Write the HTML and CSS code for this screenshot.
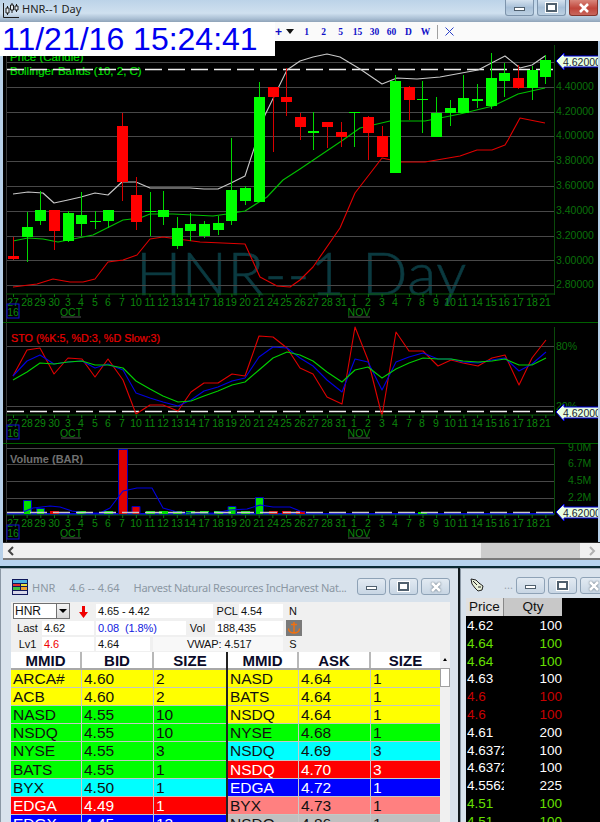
FILE: index.html
```html
<!DOCTYPE html>
<html lang="en">
<head>
<meta charset="utf-8">
<title>HNR--1 Day</title>
<link rel="stylesheet" href="styles.css">
</head>
<body>
<div class="chart-window">
  <header class="titlebar">
    <svg class="app-icon" width="16" height="16" viewBox="0 0 16 16"><path class="ico-line" d="M.5 1V15.5H16M4.5 4V13M9 1V11M13.5 2V10"/><path class="ico-box" d="M3 6h3v5H3zM7.500 3h3v5h-3zM12 4h3v4h-3z"/></svg>
    <span class="title-text">HNR--1 Day</span>
    <div class="wbtns">
      <span class="wbtn"><i class="g-min"></i></span>
      <span class="wbtn"><i class="g-max"></i></span>
      <span class="wbtn wbtn-close"><svg width="12" height="10" viewBox="0 0 12 10"><path d="M2 1l8 8M10 1L2 9"/></svg></span>
    </div>
  </header>
  <div class="toolbar">
    <span class="tool-glyph tool-plus">+</span>
    <span class="tool-glyph tool-down"></span>
    <span class="tf">1</span><span class="tf">2</span><span class="tf">5</span><span class="tf">15</span><span class="tf">30</span><span class="tf">60</span><span class="tf">D</span><span class="tf">W</span>
    <span class="tool-sep"></span>
    <svg class="tool-x" width="9" height="9" viewBox="0 0 9 9"><path d="M.5.500l8 8M8.500.500l-8 8"/></svg>
  </div>
  <div class="timestamp">11/21/16 15:24:41</div>

  <svg class="panel panel-price" width="595" height="282" viewBox="3 41 595 282">
    <defs>
      <g id="axis">
        <path class="axis-line" d="M6-12H554"/>
        <line class="ticks" x1="13" x2="554" y1="-10.500" y2="-10.500"/>
        <g class="dates">
          <text x="13">27</text><text x="27">28</text><text x="40">29</text><text x="54">30</text><text x="68">3</text><text x="81">4</text><text x="95">5</text><text x="108">6</text><text x="122">7</text><text x="136">10</text><text x="150">11</text><text x="163">12</text><text x="177">13</text><text x="190">14</text><text x="204">17</text><text x="218">18</text><text x="231">19</text><text x="245">20</text><text x="259">21</text><text x="273">24</text><text x="286">25</text><text x="300">26</text><text x="313">27</text><text x="327">28</text><text x="341">31</text><text x="354">1</text><text x="368">2</text><text x="382">3</text><text x="395">4</text><text x="409">7</text><text x="422">8</text><text x="436">9</text><text x="450">10</text><text x="463">11</text><text x="477">14</text><text x="491">15</text><text x="504">16</text><text x="518">17</text><text x="532">18</text><text x="545">21</text>
          <text x="13" y="10">16</text><text x="71" y="10">OCT</text><text x="359" y="10">NOV</text>
        </g>
        <rect class="year-box" x="7" y="-2" width="12" height="14"/>
        <path class="month-rule" d="M61 11H81M348 11H370"/>
      </g>
      <g id="tag">
        <polygon class="tag-shape" points="556,0 564,-8 564,-5 599,-5 599,6 564,6 564,9"/>
        <text class="tag-text" x="563" y="4.500">4.62000</text>
      </g>
    </defs>
    <text class="watermark" x="136" y="295">HNR--1 Day</text>
    <path class="frame-line" d="M6.500 41V323"/>
    <path class="grid" d="M7 62.500H554M7 87.500H554M7 112.500H554M7 136.500H554M7 161.500H554M7 186.500H554M7 211.500H554M7 236.500H554M7 260.500H554M7 285.500H554"/>
    <text class="legend" x="10" y="61">Price (Candle)</text>
    <text class="legend" x="10" y="75">Bollinger Bands (10, 2, C)</text>
    <path class="dash" d="M7 69.500H554"/>
    <polyline class="band band-w" points="13,194 28,192 43,193 54,203 68,200 81,197 95,193 108,195 122,182 136,182 150,188 163,188 177,188 190,188 204,189 218,189 231,183 245,176 265,115 287,70 300,61 313,57 327,54 340,57 360,69 382,84 397,78 417,79 440,77 478,70 505,56 520,68 532,65 545,56"/>
    <polyline class="band band-g" points="13,241 28,238 43,239 58,242 93,235 123,220 140,218 150,214 173,214 213,216 227,214 245,211 267,197 283,180 300,169 343,140 360,128 390,121 425,121 460,114 493,106 518,94 545,88"/>
    <polyline class="band band-r" points="13,287 37,284 53,279 70,282 83,282 95,279 108,262 123,260 137,255 150,239 163,237 200,242 245,244 260,277 277,286 290,287 300,280 313,267 340,228 355,193 382,158 400,162 425,162 460,156 477,150 492,150 505,145 508,140 520,118 545,123"/>
    <path class="wick wick-g" d="M27.500 212V262M40.500 191V225M68.500 211V242M81.500 192V236M95.500 211V229M108.500 210V228M150.500 192V236M163.500 191V225M177.500 217V249M190.500 213V241M204.500 221V238M218.500 216V235M231.500 138V225M245.500 186V205M259.500 82V202M313.500 112V150M354.500 112V147M395.500 75V173M422.500 81V133M436.500 97V137M450.500 100V126M463.500 75V113M477.500 84V108M491.500 53V109M504.500 63V97M532.500 66V100M545.500 55V84"/>
    <path class="wick wick-r" d="M13.500 237V260M54.500 210V250M122.500 113V201M136.500 177V230M273.500 87V152M286.500 68V116M300.500 113V140M327.500 122V148M341.500 122V147M368.500 116V160M382.500 126V157M409.500 86V120M518.500 65V89"/>
    <path class="body-g" d="M22 227h11v10H22zM35 210h11v11H35zM63 213h11v28H63zM76 215h11v9H76zM90 221h11v1H90zM103 210h11v11h-11zM145 211h11v1h-11zM158 210h11v7h-11zM172 228h11v18h-11zM185 224h11v7h-11zM199 224h11v12h-11zM213 223h11v7h-11zM226 190h11v31h-11zM240 188h11v13h-11zM254 97h11v105h-11zM308 131h11v2h-11zM349 112h11v1h-11zM390 81h11v92h-11zM417 99h11v1h-11zM431 113h11v24h-11zM445 108h11v5h-11zM458 98h11v15h-11zM472 99h11v2h-11zM486 78h11v28h-11zM499 73h11v8h-11zM527 70h11v18h-11zM540 60h11v17h-11z"/>
    <path class="body-r" d="M8 256h11v3H8zM49 210h11v21H49zM117 126h11v56h-11zM131 195h11v27h-11zM268 87h11v10h-11zM281 97h11v5h-11zM295 117h11v10h-11zM322 122h11v5h-11zM336 132h11v5h-11zM363 117h11v16h-11zM377 136h11v21h-11zM404 87h11v13h-11zM513 78h11v10h-11z"/>
    <path class="v-axis" d="M554.500 45V295"/>
    <g class="y-labels">
      <text x="556" y="90">4.40000</text><text x="556" y="115">4.20000</text><text x="556" y="139">4.00000</text><text x="556" y="164">3.80000</text><text x="556" y="189">3.60000</text><text x="556" y="214">3.40000</text><text x="556" y="239">3.20000</text><text x="556" y="264">3.00000</text><text x="556" y="288">2.80000</text>
    </g>
    <use href="#axis" y="306"/>
    <use href="#tag" y="61"/>
    <path class="panel-rule" d="M3 322.500H598"/>
  </svg>

  <svg class="panel panel-sto" width="595" height="121" viewBox="3 323 595 121">
    <path class="frame-line" d="M6.500 323V444"/>
    <path class="grid" d="M7 346.500H554M7 406.500H554"/>
    <text class="sto-title" x="11" y="342">STO (%K:5, %D:3, %D Slow:3)</text>
    <g class="y-labels"><text x="556" y="350">80%</text><text x="556" y="410">20%</text></g>
    <path class="dash" d="M7 411.500H554"/>
    <polyline class="band band-r" points="13,376 27,350 40,348 54,374 68,358 82,359 95,377 108,359 123,380 136,414 150,405 163,405 178,411 191,392 204,383 218,383 232,374 245,376 259,336 273,337 287,348 300,368 313,374 327,397 342,404 355,327 368,360 382,416 396,332 409,351 423,351 438,366 451,360 463,363 478,366 492,358 505,355 519,385 532,358 546,340"/>
    <polyline class="band band-b" points="13,376 27,361 40,355 54,364 68,362 82,361 95,368 108,364 123,370 136,393 150,398 163,402 178,406 191,400 204,391 218,387 232,381 245,378 259,357 273,347 287,348 300,358 313,366 327,380 342,392 355,359 368,362 382,390 396,362 409,357 423,353 438,359 451,359 463,362 478,363 492,360 505,358 519,371 532,364 546,352"/>
    <polyline class="band band-g2" points="13,380 27,372 40,363 54,364 68,362 82,361 95,365 108,365 123,368 136,381 150,389 163,396 178,402 191,401 204,396 218,391 232,385 245,382 259,370 273,358 287,352 300,355 313,361 327,372 342,382 355,370 368,367 382,378 396,369 409,363 423,358 438,359 451,359 463,361 478,362 492,361 505,359 519,365 532,365 546,358"/>
    <path class="v-axis" d="M554.500 327V416"/>
    <use href="#axis" y="427"/>
    <use href="#tag" y="412"/>
    <path class="panel-rule" d="M3 443.500H598"/>
  </svg>

  <svg class="panel panel-vol" width="595" height="98" viewBox="3 444 595 98">
    <path class="frame-line" d="M6.500 444V542"/>
    <path class="grid" d="M7 448.500H554M7 464.500H554M7 481.500H554M7 498.500H554"/>
    <text class="vol-title" x="10" y="463">Volume (BAR)</text>
    <g class="y-labels vol-labels"><text x="568" y="451">9.0M</text><text x="568" y="467">6.7M</text><text x="568" y="484">4.5M</text><text x="568" y="501">2.2M</text></g>
    <path class="vol-base" d="M7 514H554"/>
    <path class="vol-g" d="M23.500 500.500h8v14h-8zM36.500 508.500h8v6h-8zM228 506.500h8v8h-8zM255.500 497.500h8v17h-8z"/>
    <path class="vol-r" d="M118.500 449.500h9v65h-9zM132 506.500h8v8h-8z"/>
    <path class="vol-g-flat" d="M77 511h9v3h-9zM104 511h9v3h-9zM146 511h9v3h-9zM159 511h9v3h-9zM173 511h9v3h-9zM186 511h9v3h-9zM200 511h9v3h-9zM214 511h9v3h-9zM241 511h9v3h-9zM418 512h9v2h-9z"/>
    <path class="vol-r-flat" d="M50 511h9v3h-9zM269 511h9v3h-9zM282 511h9v3h-9zM296 511h9v3h-9z"/>
    <polyline class="band band-b" points="23,512 33,508 50,506 60,507 72,511 85,513 100,513 110,508 123,491 137,488 152,488 163,508 177,512 190,513 215,513 230,510 247,509 260,505 273,507 290,507 300,511 310,513"/>
    <path class="dash dash-vol" d="M7 512.500H554"/>
    <path class="v-axis" d="M554.500 448V515"/>
    <use href="#axis" y="527"/>
    <use href="#tag" y="512"/>
  </svg>

  <div class="hscroll">
    <svg class="arrow" width="8" height="10" viewBox="0 0 8 10"><path class="arrow-l" d="M6 1L2 5l4 4"/></svg>
    <span class="thumb"></span>
    <svg class="arrow" width="8" height="10" viewBox="0 0 8 10"><path class="arrow-r" d="M2 1l4 4-4 4"/></svg>
  </div>
</div>

<div class="lower">
  <section class="quote">
    <header class="q-title">
      <svg class="q-icon" width="16" height="16" viewBox="0 0 16 16"><path fill="#10185a" d="M0 0h16v16H0z"/><path fill="#4fb0e0" d="M1 1h14v3H1z"/><path fill="#e03030" d="M1 5h7v2H1z"/><path fill="#e8e040" d="M9 5h6v2H9z"/><path fill="#40c040" d="M1 8h7v3H1z"/><path fill="#f0a030" d="M9 8h6v3H9z"/><path fill="#d8d8e8" d="M1 12h14v3H1z"/></svg>
      <span class="q-name">HNR</span><span class="q-range">4.6 -- 4.64</span><span class="q-co">Harvest Natural Resources IncHarvest Nat...</span>
      <div class="wbtns wbtns-dim">
        <span class="wbtn"><i class="g-min"></i></span>
        <span class="wbtn"><i class="g-max"></i></span>
        <span class="wbtn"><svg width="12" height="10" viewBox="0 0 12 10"><path d="M2 1l8 8M10 1L2 9"/></svg></span>
      </div>
    </header>
    <div class="client">
      <div class="form">
        <div class="frow">
          <span class="combo"><span class="combo-text">HNR</span><span class="combo-btn"></span></span>
          <span class="down-wrap"><svg width="9" height="12" viewBox="0 0 9 12"><path fill="#f00000" d="M3 0h3v6h3l-4.500 6L0 6h3z"/></svg></span>
          <span class="fld w117">4.65 - 4.42</span>
          <span class="lab w26">PCL</span>
          <span class="fld w44">4.54</span>
          <span class="lab w20">N</span>
        </div>
        <div class="frow">
          <span class="lab w31">Last</span>
          <span class="fld w52">4.62</span>
          <span class="fld w90 blue">0.08&nbsp;&nbsp;(1.8%)</span>
          <span class="lab w29">Vol</span>
          <span class="fld w68">188,435</span>
          <span class="anchor"><svg width="16" height="16" viewBox="0 0 16 16"><path fill="#7a7a7a" d="M0 0h16v16H0z"/><path class="anchor-g" d="M8 2v11M5 4.500h6M2.500 8.500c0 3 3 4.500 5.500 4.500s5.500-1.500 5.500-4.500"/></svg></span>
        </div>
        <div class="frow">
          <span class="lab w31">Lv1</span>
          <span class="fld w52 red">4.6</span>
          <span class="fld w54">4.64</span>
          <span class="fld w130">VWAP: 4.517</span>
          <span class="lab w20">S</span>
        </div>
      </div>
      <div class="book">
        <div class="side">
          <div class="row head"><span>MMID</span><span>BID</span><span>SIZE</span></div>
          <div class="row yl"><span>ARCA#</span><span>4.60</span><span>2</span></div>
          <div class="row yl"><span>ACB</span><span>4.60</span><span>2</span></div>
          <div class="row gr"><span>NASD</span><span>4.55</span><span>10</span></div>
          <div class="row gr"><span>NSDQ</span><span>4.55</span><span>10</span></div>
          <div class="row gr"><span>NYSE</span><span>4.55</span><span>3</span></div>
          <div class="row gr"><span>BATS</span><span>4.55</span><span>1</span></div>
          <div class="row cy"><span>BYX</span><span>4.50</span><span>1</span></div>
          <div class="row rd"><span>EDGA</span><span>4.49</span><span>1</span></div>
          <div class="row bl"><span>EDGX</span><span>4.45</span><span>13</span></div>
        </div>
        <div class="side side-ask">
          <div class="row head"><span>MMID</span><span>ASK</span><span>SIZE</span></div>
          <div class="row yl"><span>NASD</span><span>4.64</span><span>1</span></div>
          <div class="row yl"><span>BATS</span><span>4.64</span><span>1</span></div>
          <div class="row yl"><span>NSDQ</span><span>4.64</span><span>1</span></div>
          <div class="row gr"><span>NYSE</span><span>4.68</span><span>1</span></div>
          <div class="row cy"><span>NSDQ</span><span>4.69</span><span>3</span></div>
          <div class="row rd"><span>NSDQ</span><span>4.70</span><span>3</span></div>
          <div class="row bl"><span>EDGA</span><span>4.72</span><span>1</span></div>
          <div class="row sa"><span>BYX</span><span>4.73</span><span>1</span></div>
          <div class="row gy"><span>NSDQ</span><span>4.86</span><span>1</span></div>
        </div>
        <div class="vscroll">
          <span class="vs-up"></span>
          <span class="vs-thumb"></span>
        </div>
      </div>
    </div>
  </section>
  <section class="tape">
    <header class="t-title">
      <svg class="t-icon" width="16" height="16" viewBox="0 0 16 16"><path class="t-ico" d="M2 2l5 1 3 3 4 3-1 4-4 1-3-3-3-4z"/><path class="t-ico2" d="M4 4l4 4M7 3l4 4M9 10l3 0"/></svg>
      <span class="t-dots">...</span>
      <div class="wbtns wbtns-dim">
        <span class="wbtn"><i class="g-min"></i></span>
        <span class="wbtn"><i class="g-max"></i></span>
        <span class="wbtn"><svg width="12" height="10" viewBox="0 0 12 10"><path d="M2 1l8 8M10 1L2 9"/></svg></span>
      </div>
    </header>
    <div class="t-client">
      <div class="t-head"><span>Price</span><span>Qty</span></div>
      <div class="t-row wh"><span>4.62</span><span>100</span></div>
      <div class="t-row lg"><span>4.64</span><span>100</span></div>
      <div class="t-row lg"><span>4.64</span><span>100</span></div>
      <div class="t-row wh"><span>4.63</span><span>100</span></div>
      <div class="t-row dr"><span>4.6</span><span>100</span></div>
      <div class="t-row dr"><span>4.6</span><span>100</span></div>
      <div class="t-row wh"><span>4.61</span><span>200</span></div>
      <div class="t-row wh"><span>4.6372</span><span>100</span></div>
      <div class="t-row wh"><span>4.6372</span><span>100</span></div>
      <div class="t-row wh"><span>4.5562</span><span>225</span></div>
      <div class="t-row lg"><span>4.51</span><span>100</span></div>
      <div class="t-row lg"><span>4.51</span><span>100</span></div>
    </div>
  </section>
</div>
</body>
</html>
```

FILE: styles.css
```css
* { box-sizing: border-box; }
html, body { margin: 0; padding: 0; }
body {
  width: 600px;
  height: 822px;
  overflow: hidden;
  position: relative;
  background: #10181c;
  font-family: "Liberation Sans", Arial, sans-serif;
}

/* ---------- chart window ---------- */
.chart-window {
  height: 568px;
  padding: 0 2px 0 3px;
  background: #b7d0e8;
  border-bottom: 2px solid #0a2a33;
  box-shadow: inset 0 -7px 0 #b7d3ee;
}
.titlebar {
  height: 22px;
  margin: 0 -2px 0 -3px;
  padding: 0 2px 0 3px;
  display: flex;
  align-items: flex-start;
  background: linear-gradient(#bcd3e8, #cfe0ef 60%, #a8bdd2 86%, #8fa3b8);
}
.app-icon { margin-top: 2px; flex: none; }
.ico-line, .ico-box { fill: none; stroke: #1c1c1c; stroke-width: 1; }
.ico-box { fill: #e8eef4; }
.title-text {
  margin: 0 0 0 3px;
  font: 11px/18px "Noto Sans", sans-serif;
  color: #222;
}
.wbtns { margin-left: auto; display: flex; gap: 3px; flex: none; }
.wbtn {
  width: 29px;
  height: 16px;
  border: 1px solid #7d94ac;
  border-top: 0;
  border-radius: 0 0 3px 3px;
  display: flex;
  align-items: center;
  justify-content: center;
  background: linear-gradient(#d4e2ef, #a8c0d8 50%, #bcd0e2);
}
.wbtn svg path { fill: none; stroke: #fff; stroke-width: 2.500; }
.wbtn-close {
  border-color: #84352c;
  background: linear-gradient(#d9877c, #c0453a 55%, #c8665c);
}
.g-min { width: 11px; height: 4px; background: #fff; border: 1px solid #50606e; margin-top: 3px; }
.g-max { width: 11px; height: 9px; background: #fff; border: 2px solid #50606e; box-shadow: 0 0 0 1px #fff; }
.toolbar {
  height: 19px;
  margin-right: -2px;
  padding-right: 146px;
  background: #fafafa;
  display: flex;
  align-items: center;
  justify-content: flex-end;
  position: relative;
}
.tf {
  width: 17px;
  flex: none;
  text-align: center;
  font: bold 9.500px/14px "Liberation Serif", serif;
  color: #1010c8;
}
.tool-glyph { flex: none; }
.tool-plus { width: 11px; font: bold 12px/14px "Liberation Sans", sans-serif; color: #1010c8; text-align: center; }
.tool-down {
  width: 0;
  height: 0;
  margin: 0 4px 0 2px;
  border-left: 4px solid transparent;
  border-right: 4px solid transparent;
  border-top: 5px solid #111;
}
.tool-sep { width: 1px; height: 14px; margin: 0 7px 0 3px; background: #a0a0a0; flex: none; }
.tool-x { flex: none; margin-right: 0; }
.tool-x path { fill: none; stroke: #2a3fc8; stroke-width: 1; }
.timestamp {
  position: absolute;
  left: 0;
  top: 22px;
  width: 275px;
  height: 34px;
  padding-left: 2px;
  background: #fff;
  color: #0000f0;
  font-size: 32px;
  line-height: 34px;
  white-space: nowrap;
  z-index: 2;
}
.panel { display: block; background: #000; }
.panel text { font-family: "Liberation Sans", Arial, sans-serif; }
.panel .watermark {
  font-family: "Lato", sans-serif;
  font-weight: 300;
  font-size: 60px;
  fill: #0b3a40;
  stroke: #0b3a40;
  stroke-width: .6;
  letter-spacing: .5px;
}
.frame-line { stroke: #383838; stroke-width: 1; fill: none; }
.grid { stroke: #484848; stroke-width: 1; fill: none; }
.legend { font-size: 11.500px; fill: #00e000; stroke: #00e000; stroke-width: .15; }
.dash { stroke: #f0f0f0; stroke-width: 1.500; stroke-dasharray: 17 6; fill: none; }
.dash-vol { stroke: #c8c8c8; }
.band { fill: none; stroke-width: 1.100; stroke-linejoin: round; }
.band-w { stroke: #c8c8c8; }
.band-g { stroke: #00c000; }
.band-r { stroke: #e00000; }
.band-b { stroke: #0000e0; }
.band-g2 { stroke: #00d000; }
.wick { fill: none; stroke-width: 1; }
.wick-g { stroke: #00d800; }
.wick-r { stroke: #d80000; }
.body-g { fill: #00ff00; }
.body-r { fill: #ff0000; }
.v-axis { stroke: #0a4a0a; stroke-width: 1; fill: none; }
.y-labels text { font-size: 10.500px; fill: #0a700a; }
.axis-line { stroke: #0a5a0a; stroke-width: 1; fill: none; }
.ticks { stroke: #0a7a0a; stroke-width: 3; stroke-dasharray: 1 12.650; }
.dates text { font-size: 10.500px; fill: #0c860c; text-anchor: middle; }
.year-box { fill: none; stroke: #1010d8; stroke-width: 1; }
.month-rule { stroke: #555; stroke-width: 1; fill: none; }
.tag-shape { fill: #e8ffe0; stroke: #0000e0; stroke-width: 1; }
.tag-text { font-size: 10.500px; fill: #223; }
.panel-rule { stroke: #006000; stroke-width: 1; fill: none; }
.sto-title { font-size: 10.800px; fill: #e80000; stroke: #e80000; stroke-width: .2; }
.vol-title { font-size: 11px; fill: #707070; font-weight: 700; }
.vol-base { stroke: #0000e0; stroke-width: 2; fill: none; }
.vol-g { fill: #00e000; stroke: #0000c0; }
.vol-r { fill: #e00000; stroke: #0000c0; }
.vol-g-flat { fill: #00e000; }
.vol-r-flat { fill: #e00000; }
.hscroll {
  height: 18px;
  margin-right: -2px;
  padding: 0 4px 0 4px;
  background: #f0f0f0;
  border-top: 1px solid #2a2a2a;
  border-bottom: 2px solid #7a7a7a;
  display: flex;
  align-items: center;
}
.arrow path { fill: none; stroke-width: 2; }
.arrow-l { stroke: #444; }
.arrow-r { stroke: #b0b0b0; }
.thumb { width: 99px; height: 15px; margin-left: auto; margin-right: 8px; background: #cdcdcd; }

/* ---------- lower windows ---------- */
.lower {
  height: 254px;
  display: flex;
  gap: 2px;
}
.quote {
  width: 458px;
  flex: none;
  padding: 0 8px 0 10px;
  background: #d8e2ec;
  border-left: 1px solid #8a97a4;
  border-top: 1px solid #a0aab4;
}
.q-title {
  height: 33px;
  margin: 0;
  display: flex;
  align-items: flex-start;
  padding-top: 9px;
  font: 11px/20px "Noto Sans", sans-serif;
  color: #8b97a3;
  white-space: nowrap;
  overflow: hidden;
}
.q-icon { margin: 1px 4px 0 1px; flex: none; }
.q-range { margin-left: 14px; }
.q-co { margin-left: 14px; letter-spacing: -.3px; }
.wbtns-dim { margin-top: 0; }
.wbtns-dim .wbtn {
  height: 17px;
  border: 1px solid #8ea2b6;
  border-radius: 3px;
  background: linear-gradient(#e2eaf2, #c8d6e4);
}
.wbtns-dim .wbtn svg path { stroke: #fff; }
.wbtns-dim .wbtn svg { filter: drop-shadow(0 0 1px #55636f); }
.client { background: #f0f0f0; height: 221px; overflow: hidden; }
.form { height: 50px; padding-top: 1px; }
.frow {
  height: 16.500px;
  display: flex;
  align-items: center;
  font-size: 11px;
  color: #111;
}
.fld {
  height: 14px;
  padding-left: 2px;
  background: #fff;
  line-height: 14px;
  white-space: nowrap;
  overflow: hidden;
  flex: none;
  letter-spacing: -.1px;
}
.lab { flex: none; text-align: center; line-height: 14px; }
.w20 { width: 20px; }
.w26 { width: 26px; text-align: right; padding-right: 1px; }
.w29 { width: 29px; padding-right: 6px; }
.w31 { width: 31px; padding-left: 2px; }
.w44 { width: 44px; }
.w52 { width: 52px; margin-right: 2px; }
.w54 { width: 54px; margin-right: 3px; }
.w68 { width: 68px; }
.w90 { width: 90px; }
.w117 { width: 117px; }
.w130 { width: 130px; padding-left: 34px; background: #f8f8f8; }
.blue { color: #1020e0; }
.red { color: #f00000; }
.combo {
  width: 57px;
  height: 16px;
  margin-left: 2px;
  display: flex;
  justify-content: space-between;
  background: #fff;
  border: 1px solid #707070;
  border-right: 0;
  flex: none;
  font-size: 12px;
  line-height: 14px;
  padding-left: 1px;
}
.combo-btn {
  width: 14px;
  background: linear-gradient(#f4f4f4, #d8d8d8);
  border: 1px solid #707070;
  border-top: 0;
  border-bottom: 0;
  position: relative;
}
.combo-btn::after {
  content: "";
  position: absolute;
  left: 2px;
  top: 5px;
  border-left: 4px solid transparent;
  border-right: 4px solid transparent;
  border-top: 4px solid #000;
}
.down-wrap { width: 26px; flex: none; text-align: center; line-height: 12px; padding-top: 3px; }
.anchor { margin-left: 3px; line-height: 0; flex: none; }
.anchor-g { fill: none; stroke: #f07010; stroke-width: 1.500; }

.book { display: flex; position: relative; }
.side { width: 215px; flex: none; }
.side-ask { border-left: 2px solid #222; width: 214px; }
.row {
  height: 18.100px;
  display: grid;
  grid-template-columns: 71px 72px 1fr;
  border-bottom: 1.500px solid #c4c8c4;
  font-size: 15.500px;
  line-height: 17px;
  color: #111;
  white-space: nowrap;
  overflow: hidden;
}
.row span { padding-left: 2px; border-right: 1px solid #c8c8c8; overflow: hidden; }
.row span:last-child { border-right: 0; }
.head {
  background: #fff;
  font-weight: 700;
  font-size: 15px;
  border-bottom: 2px solid #a8a8a8;
  color: #0a0a28;
}
.head span { text-align: center; border-right: 2px solid #b8b8b8; padding-left: 0; }
.yl { background: #ffff00; }
.gr { background: #00ff00; }
.cy { background: #00ffff; }
.rd { background: #ff0000; color: #fff; }
.bl { background: #0000ff; color: #fff; }
.sa { background: #ff8080; }
.gy { background: #c0c0c0; }
.vscroll {
  width: 10px;
  flex: none;
  background: #f0f0f0;
  display: flex;
  flex-direction: column;
  align-items: center;
}
.vs-up {
  width: 100%;
  height: 15px;
  position: relative;
  background: #f0f0f0;
}
.vs-up::after {
  content: "";
  position: absolute;
  left: 3px;
  top: 6px;
  border-left: 2px solid transparent;
  border-right: 2px solid transparent;
  border-bottom: 3px solid #000;
}
.vs-thumb { width: 100%; height: 19px; margin-top: 1px; background: #fff; border: 1px solid #a0a0a0; }

.tape {
  width: 140px;
  flex: none;
  padding-left: 5px;
  background: #d8e2ec;
  border-top: 1px solid #a0aab4;
  border-left: 1px solid #8a97a4;
}
.t-title {
  height: 29px;
  padding-top: 8px;
  display: flex;
  align-items: flex-start;
  overflow: hidden;
}
.t-icon { margin-left: 3px; flex: none; }
.t-ico { fill: #e8f0d8; stroke: #222; stroke-width: 1; }
.t-ico2 { fill: none; stroke: #222; stroke-width: 1; }
.t-dots { margin-left: 19px; font: 11px/16px "Noto Sans", sans-serif; color: #9aa4ae; flex: none; }
.t-title .wbtns { margin-left: 3px; flex: none; }
.t-client { background: #000; height: 224px; overflow: hidden; }
.t-head { display: flex; height: 18px; font-size: 13.500px; line-height: 18px; color: #111; text-align: center; }
.t-head span:first-child { width: 38px; background: #e0e0e0; border-right: 1px solid #888; }
.t-head span:last-child { width: 58px; background: #c8c8c8; }
.t-row {
  display: flex;
  justify-content: space-between;
  width: 96px;
  height: 17.800px;
  font-size: 13.500px;
  line-height: 18px;
  padding-left: 1px;
  white-space: nowrap;
}
.t-row:nth-child(2) { margin-top: 1px; }
.t-row span:first-child { width: 37px; overflow: hidden; }
.wh { color: #fff; }
.lg { color: #66e000; }
.dr { color: #c80000; }
```
